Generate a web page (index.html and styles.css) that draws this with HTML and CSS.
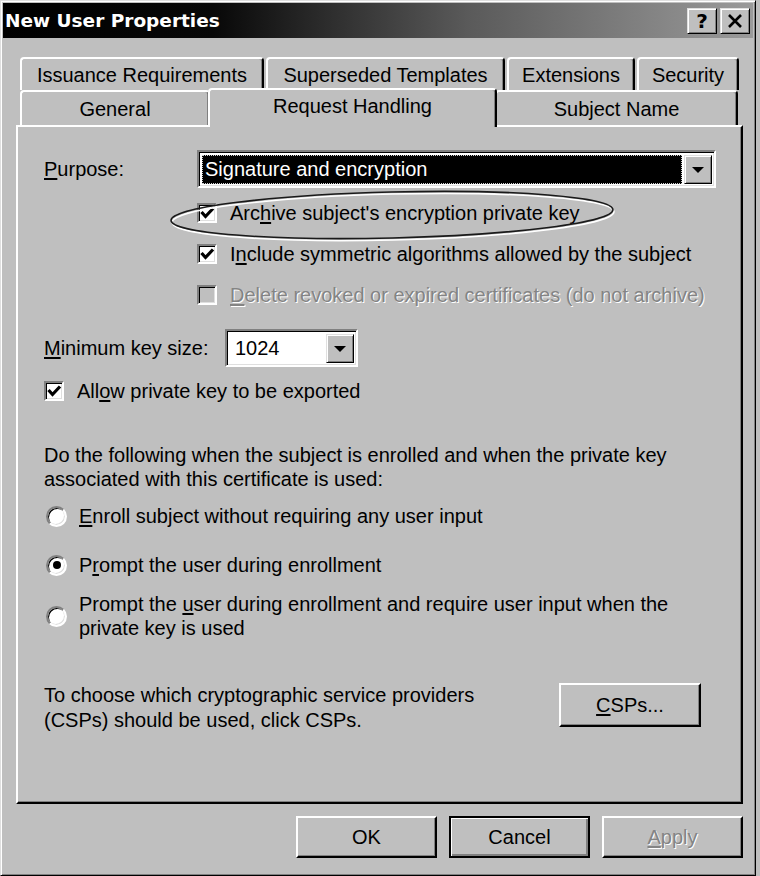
FILE: index.html
```html
<!DOCTYPE html>
<html>
<head>
<meta charset="utf-8">
<link rel="stylesheet" href="styles.css">
</head>
<body>
<div class="window">
  <div class="titlebar">
    <span class="title">New User Properties</span>
    <div class="caption-btns">
      <div class="cap help">?</div>
      <div class="cap close">
        <svg width="16" height="14" viewBox="0 0 16 14"><path d="M2 1 L14 13 M14 1 L2 13" stroke="#000" stroke-width="2.6" fill="none"/></svg>
      </div>
    </div>
  </div>

  <div class="content">
    <div class="tabs">
      <div class="tabrow back">
        <div class="tab t-iss">Issuance Requirements</div>
        <div class="tab t-sup">Superseded Templates</div>
        <div class="tab t-ext">Extensions</div>
        <div class="tab t-sec">Security</div>
      </div>
      <div class="tabrow front">
        <div class="tab t-gen">General</div>
        <div class="tab t-req active">Request Handling</div>
        <div class="tab t-sub">Subject Name</div>
      </div>
    </div>

    <div class="panel">
      <div class="row purpose">
        <div class="lbl"><u>P</u>urpose:</div>
        <div class="combo wide">
          <div class="combo-text sel">Signature and encryption</div>
          <div class="dd"><span class="tri"></span></div>
        </div>
      </div>

      <div class="checks">
        <div class="check">
          <span class="cb"><svg viewBox="0 0 16 16" width="16" height="16"><path d="M2.5 7 L6.5 11.5 L14 3.5" stroke="#000" stroke-width="3.2" fill="none"/></svg></span>
          <span>Arc<u>h</u>ive subject's encryption private key</span>
        </div>
        <div class="check">
          <span class="cb"><svg viewBox="0 0 16 16" width="16" height="16"><path d="M2.5 7 L6.5 11.5 L14 3.5" stroke="#000" stroke-width="3.2" fill="none"/></svg></span>
          <span>I<u>n</u>clude symmetric algorithms allowed by the subject</span>
        </div>
        <div class="check disabled">
          <span class="cb off"></span>
          <span class="dis"><u>D</u>elete revoked or expired certificates (do not archive)</span>
        </div>
      </div>

      <div class="row keysize">
        <div class="lbl2"><u>M</u>inimum key size:</div>
        <div class="combo small">
          <div class="combo-text plain">1024</div>
          <div class="dd"><span class="tri"></span></div>
        </div>
      </div>

      <div class="check allow">
        <span class="cb"><svg viewBox="0 0 16 16" width="16" height="16"><path d="M2.5 7 L6.5 11.5 L14 3.5" stroke="#000" stroke-width="3.2" fill="none"/></svg></span>
        <span>All<u>o</u>w private key to be exported</span>
      </div>

      <p class="para">Do the following when the subject is enrolled and when the private key associated with this certificate is used:</p>

      <div class="radio r1">
        <span class="rb"></span>
        <span><u>E</u>nroll subject without requiring any user input</span>
      </div>
      <div class="radio r2">
        <span class="rb on"><span class="dot"></span></span>
        <span>P<u>r</u>ompt the user during enrollment</span>
      </div>
      <div class="radio r3">
        <span class="rb"></span>
        <span>Prompt the <u>u</u>ser during enrollment and require user input when the<br>private key is used</span>
      </div>

      <div class="csp-row">
        <div class="csp-text">To choose which cryptographic service providers<br>(CSPs) should be used, click CSPs.</div>
        <div class="btn csp"><span><u>C</u>SPs...</span></div>
      </div>
    </div>

    <div class="buttons">
      <div class="btn">OK</div>
      <div class="btn default">Cancel</div>
      <div class="btn disabled"><span class="dis"><u>A</u>pply</span></div>
    </div>
  </div>

  <svg class="annot" width="756" height="876" viewBox="0 0 756 876">
    <ellipse cx="392" cy="216" rx="221" ry="23" transform="rotate(-1.4 392 216)" fill="none" stroke="#fff" stroke-width="1.6"/>
    <ellipse cx="391" cy="214" rx="221" ry="23" transform="rotate(-1.4 391 214)" fill="none" stroke="#1a1a1a" stroke-width="1.6"/>
  </svg>
</div>
</body>
</html>
```

FILE: styles.css
```css
* { box-sizing: border-box; }

html, body {
  margin: 0;
  padding: 0;
  background: #bfbfbf;
}

body {
  font-family: "Liberation Sans", Arial, sans-serif;
  font-size: 20px;
  color: #000;
}

u { text-decoration: underline; text-underline-offset: 2px; }

.window {
  position: relative;
  width: 756px;
  height: 876px;
  background: #bfbfbf;
  border: 1px solid;
  border-color: #dfdfdf #000 #000 #dfdfdf;
  box-shadow: inset 1px 1px 0 #fff, inset -1px -1px 0 #808080;
  padding: 2px;
}

/* Title bar */
.titlebar {
  height: 35px;
  display: flex;
  align-items: center;
  padding-left: 2px;
  padding-right: 3px;
  background: linear-gradient(to right, #000 0%, #080808 28%, #5a5a5a 62%, #9a9a9a 100%);
}

.title {
  font-family: "DejaVu Sans", Verdana, sans-serif;
  font-weight: bold;
  font-size: 18.5px;
  color: #fff;
}

.caption-btns {
  margin-left: auto;
  display: flex;
  gap: 3px;
  margin-top: 1px;
}

.cap {
  width: 30px;
  height: 26px;
  background: #bfbfbf;
  border: 1px solid;
  border-color: #dfdfdf #000 #000 #dfdfdf;
  box-shadow: inset 1px 1px 0 #fff, inset -1px -1px 0 #808080;
  display: flex;
  align-items: center;
  justify-content: center;
}

.cap.help {
  font-family: "DejaVu Sans", sans-serif;
  font-weight: bold;
  font-size: 20px;
  line-height: 1;
}

/* Content area */
.content {
  margin-left: 13px;
  width: 727px;
}

.tabs {
  margin-top: 19px;
  padding-left: 4px;
  position: relative;
  z-index: 2;
}

.tabrow {
  display: flex;
}

.tabrow.back {
  height: 33px;
  gap: 2px;
}

.tabrow.front {
  height: 35px;
  align-items: flex-end;
}

.tab {
  height: 100%;
  display: flex;
  align-items: center;
  justify-content: center;
  background: #bfbfbf;
  border-top: 2px solid #fff;
  border-left: 2px solid #fff;
  border-right: 2px solid #000;
  box-shadow: inset -1px 0 0 #808080;
  border-top-left-radius: 4px;
  border-top-right-radius: 4px;
  white-space: nowrap;
  padding-top: 1px;
}

.t-iss { width: 244px; }
.t-sup { width: 239px; }
.t-ext { width: 128px; }
.t-sec { width: 102px; }

.t-gen { width: 190px; }
.t-sub { width: 243px; }

.t-req.active {
  width: 289px;
  height: 39px;
  margin: 0 -2px -2px -2px;
  position: relative;
  z-index: 3;
  align-items: flex-start;
  padding-top: 5px;
}

/* Panel */
.panel {
  position: relative;
  height: 679px;
  border: 2px solid;
  border-color: #fff #000 #000 #fff;
  box-shadow: inset -1px -1px 0 #808080;
  padding: 23px 25px 0 26px;
}

.row {
  display: flex;
  align-items: center;
}

.purpose {
  height: 38px;
}

.lbl {
  width: 153px;
}

.lbl2 {
  width: 181px;
}

.combo {
  height: 38px;
  display: flex;
  background: #fff;
  border: 2px solid;
  border-color: #808080 #fff #fff #808080;
  box-shadow: inset 1px 1px 0 #000, inset -1px -1px 0 #dfdfdf;
  padding: 3px 2px 2px 3px;
}

.combo.wide { flex: 1; }

.combo.small { width: 133px; }

.combo-text {
  flex: 1;
  display: flex;
  align-items: center;
  white-space: nowrap;
}

.combo-text.sel {
  background: #000;
  color: #fff;
  border: 1px dotted #cfcfcf;
  padding-left: 2px;
  margin-right: 2px;
}

.combo-text.plain {
  padding-left: 5px;
}

.dd {
  width: 28px;
  background: #bfbfbf;
  border: 1px solid;
  border-color: #dfdfdf #000 #000 #dfdfdf;
  box-shadow: inset 1px 1px 0 #fff, inset -1px -1px 0 #808080;
  display: flex;
  align-items: center;
  justify-content: center;
}

.tri {
  width: 0;
  height: 0;
  border-left: 6px solid transparent;
  border-right: 6px solid transparent;
  border-top: 6px solid #000;
  margin-top: 1px;
}

/* Checkboxes */
.checks {
  margin-left: 153px;
  margin-top: 13px;
  display: flex;
  flex-direction: column;
  gap: 17px;
}

.check {
  display: flex;
  align-items: center;
  height: 24px;
  gap: 13px;
  white-space: nowrap;
}

.cb {
  width: 20px;
  height: 20px;
  flex: none;
  background: #fff;
  border: 2px solid;
  border-color: #808080 #fff #fff #808080;
  box-shadow: inset 1px 1px 0 #000, inset -1px -1px 0 #dfdfdf;
  display: flex;
  align-items: center;
  justify-content: center;
}

.cb svg { display: block; }

.cb.off {
  background: #bfbfbf;
}

.dis {
  color: #848484;
  text-shadow: 1px 1px 0 #fff;
}

.keysize {
  margin-top: 22px;
  height: 38px;
}

.check.allow {
  margin-top: 12px;
}

.para {
  margin: 40px 0 0 0;
  line-height: 24px;
  width: 650px;
}

/* Radios */
.radio {
  display: flex;
  align-items: center;
  gap: 12px;
  line-height: 24px;
  white-space: nowrap;
}

.r1 { margin-top: 13px; }
.r2 { margin-top: 25px; }
.r3 { margin-top: 15px; }

.rb {
  width: 21px;
  height: 21px;
  margin-left: 2px;
  flex: none;
  border-radius: 50%;
  background: #fff;
  border: 2px solid;
  border-color: #808080 #fff #fff #808080;
  box-shadow: inset 1px 1px 0 #000, inset -1px -1px 0 #dfdfdf;
  display: flex;
  align-items: center;
  justify-content: center;
}

.rb .dot {
  width: 8px;
  height: 8px;
  border-radius: 50%;
  background: #000;
}

/* CSP row */
.csp-row {
  margin-top: 43px;
  display: flex;
  align-items: flex-start;
}

.csp-text {
  line-height: 25px;
}

.btn {
  width: 141px;
  height: 42px;
  display: flex;
  align-items: center;
  justify-content: center;
  background: #bfbfbf;
  border: 2px solid;
  border-color: #fff #000 #000 #fff;
  box-shadow: inset -1px -1px 0 #808080;
}

.btn.csp {
  margin-left: auto;
  margin-right: 15px;
  width: 142px;
  height: 44px;
}

.btn.default {
  border: 2px solid #000;
  box-shadow: inset 1px 1px 0 #fff, inset -2px -2px 0 #808080;
}

.buttons {
  margin-top: 12px;
  display: flex;
  justify-content: flex-end;
  gap: 12px;
}

.annot {
  position: absolute;
  left: 0;
  top: 0;
  pointer-events: none;
}
```
